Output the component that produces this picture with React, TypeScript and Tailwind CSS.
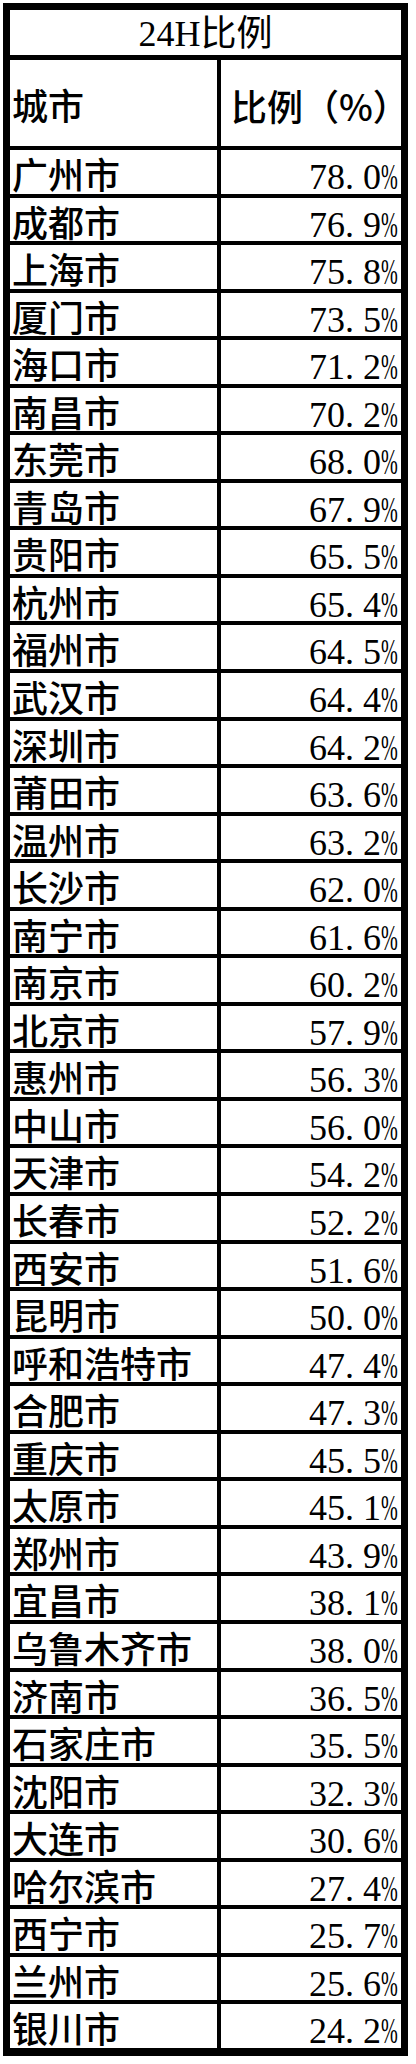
import React from 'react';

// 城市 / 24H比例 (%)
const ROWS: [string, string][] = [
  ['广州市', '78.0'],
  ['成都市', '76.9'],
  ['上海市', '75.8'],
  ['厦门市', '73.5'],
  ['海口市', '71.2'],
  ['南昌市', '70.2'],
  ['东莞市', '68.0'],
  ['青岛市', '67.9'],
  ['贵阳市', '65.5'],
  ['杭州市', '65.4'],
  ['福州市', '64.5'],
  ['武汉市', '64.4'],
  ['深圳市', '64.2'],
  ['莆田市', '63.6'],
  ['温州市', '63.2'],
  ['长沙市', '62.0'],
  ['南宁市', '61.6'],
  ['南京市', '60.2'],
  ['北京市', '57.9'],
  ['惠州市', '56.3'],
  ['中山市', '56.0'],
  ['天津市', '54.2'],
  ['长春市', '52.2'],
  ['西安市', '51.6'],
  ['昆明市', '50.0'],
  ['呼和浩特市', '47.4'],
  ['合肥市', '47.3'],
  ['重庆市', '45.5'],
  ['太原市', '45.1'],
  ['郑州市', '43.9'],
  ['宜昌市', '38.1'],
  ['乌鲁木齐市', '38.0'],
  ['济南市', '36.5'],
  ['石家庄市', '35.5'],
  ['沈阳市', '32.3'],
  ['大连市', '30.6'],
  ['哈尔滨市', '27.4'],
  ['西宁市', '25.7'],
  ['兰州市', '25.6'],
  ['银川市', '24.2'],
];

const CJK = "font-['Noto_Sans_CJK_SC',sans-serif] font-medium";
const SERIF = "font-['Liberation_Serif','Noto_Sans_CJK_SC',serif]";

// spreadsheet-style number: dot takes a full half-width cell, narrow percent sign
const Percent: React.FC<{ value: string }> = ({ value }) => {
  const [int, dec] = value.split('.');
  return (
    <span className="whitespace-nowrap">
      {int}.
      <span className="inline-block w-[0.25em]" />
      {dec}
      <span className="inline-block w-[17px]">
        <span className="inline-block origin-left scale-x-[0.56]">%</span>
      </span>
    </span>
  );
};

const App: React.FC = () => {
  return (
    <div className="min-h-screen bg-white pt-[3px] pl-[3px] text-black">
      <div className="grid w-[405px] grid-cols-[207px_180px] gap-[4px] bg-black p-[7px] pb-[8px]">
        {/* title */}
        <div className={`col-span-2 mb-[1px] h-[45px] bg-white pt-[6px] text-center text-[36px] leading-none ${SERIF}`}>
          24H比例
        </div>

        {/* header */}
        <div className={`h-[86px] bg-white pl-[2px] pt-[26px] text-[36px] leading-none ${CJK}`}>城市</div>
        <div className={`h-[86px] bg-white pl-[10px] pt-[27px] text-[36px] leading-none ${CJK}`}>比例（%）</div>

        {ROWS.map(([city, pct]) => (
          <React.Fragment key={city}>
            <div className={`h-[43.55px] whitespace-nowrap bg-white pl-[2px] pt-[5px] text-[36px] leading-none ${CJK}`}>
              {city}
            </div>
            <div className={`h-[43.55px] bg-white pr-[3px] pt-[9px] text-right text-[36px] leading-none ${SERIF}`}>
              <Percent value={pct} />
            </div>
          </React.Fragment>
        ))}
      </div>
    </div>
  );
};

export default App;
